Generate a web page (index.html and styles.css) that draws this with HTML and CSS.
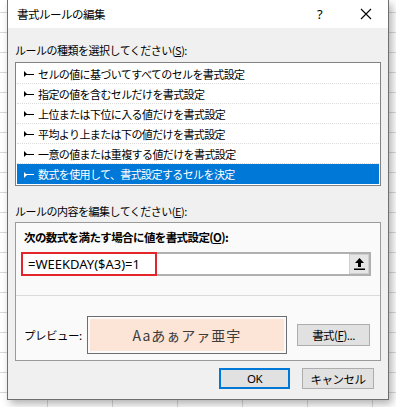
FILE: index.html
```
<!DOCTYPE html>
<html lang="ja">
<head>
    <meta charset="UTF-8">
    <title>書式ルールの編集</title>
    <link rel="stylesheet" href="styles.css">
</head>
<body>
    <div class="dialog">
        <!-- Title bar -->
        <div class="titlebar">
            <span class="title">書式ルールの編集</span>
            <span class="help">?</span>
            <span class="close">
                <svg width="12" height="12" viewBox="0 0 12 12"><path d="M1 1 L11 11 M11 1 L1 11" stroke="#000" stroke-width="1.1" fill="none"/></svg>
            </span>
        </div>

        <div class="body">
            <div class="label">ルールの種類を選択してください(<u>S</u>):</div>
            <ul class="rules">
                <li><span class="arrow"></span>セルの値に基づいてすべてのセルを書式設定</li>
                <li><span class="arrow"></span>指定の値を含むセルだけを書式設定</li>
                <li><span class="arrow"></span>上位または下位に入る値だけを書式設定</li>
                <li><span class="arrow"></span>平均より上または下の値だけを書式設定</li>
                <li><span class="arrow"></span>一意の値または重複する値だけを書式設定</li>
                <li class="selected"><span class="arrow"></span>数式を使用して、書式設定するセルを決定</li>
            </ul>

            <div class="label label-edit">ルールの内容を編集してください(<u>E</u>):</div>
            <div class="panel">
                <div class="panel-title">次の数式を満たす場合に値を書式設定(<u>O</u>):</div>
                <div class="formula">
                    <span class="formula-text">=WEEKDAY($A3)=1</span>
                    <span class="collapse">
                        <svg width="11" height="12" viewBox="0 0 11 12"><path d="M5.5 0 L10 5 L7 5 L7 9 L4 9 L4 5 L1 5 Z" fill="#000"/><rect x="0" y="10.5" width="11" height="1.5" fill="#000"/></svg>
                    </span>
                    <div class="highlight"></div>
                </div>
                <div class="separator"></div>
                <div class="preview-row">
                    <span class="preview-label">プレビュー:</span>
                    <div class="preview"><span>Aaあぁアァ亜宇</span></div>
                    <button class="btn btn-format">書式(<u>F</u>)...</button>
                </div>
            </div>

            <div class="actions">
                <button class="btn btn-ok">OK</button>
                <button class="btn btn-cancel">キャンセル</button>
            </div>
        </div>
    </div>
</body>
</html>
```

FILE: styles.css
```
html, body {
    margin: 0;
    height: 407px;
    overflow: hidden;
}
body {
    font-family: "Noto Sans CJK JP", "Noto Sans", sans-serif;
    font-size: 11px;
    letter-spacing: -0.5px;
    color: #000;
    background-color: #fff;
    background-image:
        repeating-linear-gradient(to right, transparent 0, transparent 47px, #d9d9d9 47px, #d9d9d9 48px, transparent 48px, transparent 65px),
        repeating-linear-gradient(to bottom, transparent 0, transparent 12px, #d9d9d9 12px, #d9d9d9 13px, transparent 13px, transparent 20px);
}
.dialog {
    margin-left: 7px;
    width: 382px;
    box-sizing: border-box;
    background: #f0f0f0;
    border: 1px solid #6e6e6e;
    border-top: none;
    box-shadow: 3px 4px 8px rgba(0, 0, 0, 0.3);
}
.titlebar {
    height: 28px;
    background: #fff;
    display: flex;
    align-items: center;
    padding-left: 9px;
}
.title {
    flex: 1;
    font-size: 11.5px;
}
.help {
    width: 12px;
    margin-right: 31px;
    font-size: 13px;
    font-family: "Noto Sans", sans-serif;
}
.close {
    width: 12px;
    height: 12px;
    margin-right: 16px;
    display: flex;
}
.body {
    padding: 0 7px 10px 7px;
}
.label {
    margin-top: 14px;
    height: 16px;
    line-height: 16px;
}
.label-edit {
    margin-top: 17px;
}
.rules {
    list-style: none;
    margin: 4px 0 0 0;
    padding: 1px;
    height: 124px;
    box-sizing: border-box;
    background: #fff;
    border: 1px solid #828282;
}
.rules li {
    height: 20px;
    box-sizing: border-box;
    display: flex;
    align-items: center;
    padding-left: 7px;
    letter-spacing: -0.6px;
    border-bottom: 1px dotted #dcdcdc;
}
.rules li.selected {
    background: #0078d7;
    color: #fff;
    border-bottom: none;
}
.arrow {
    width: 10px;
    height: 6px;
    margin-right: 4px;
    margin-top: 1px;
    background:
        linear-gradient(#000, #000) 0 2.5px / 10px 1px no-repeat;
    position: relative;
}
.arrow::before {
    content: "";
    position: absolute;
    left: 0;
    top: 0;
    border-left: 3px solid #000;
    border-top: 3px solid transparent;
    border-bottom: 3px solid transparent;
}
.selected .arrow {
    background:
        linear-gradient(#fff, #fff) 0 2.5px / 10px 1px no-repeat;
}
.selected .arrow::before {
    border-left-color: #fff;
}
.panel {
    margin-top: 3px;
    background: #fafafa;
    border: 1px solid #9a9a9a;
    padding: 6px 0 6px 0;
}
.panel-title {
    height: 16px;
    line-height: 16px;
    padding-left: 8px;
    font-weight: bold;
    font-size: 11.5px;
    letter-spacing: -0.6px;
}
.formula {
    position: relative;
    margin: 7px 9px 0 5px;
    height: 24px;
    box-sizing: border-box;
    border: 2px solid #b0b0b0;
    background: #fff;
    display: flex;
    align-items: center;
}
.formula-text {
    flex: 1;
    padding-left: 5px;
    font-family: "Noto Sans", sans-serif;
    font-size: 13px;
    letter-spacing: 0;
}
.collapse {
    width: 20px;
    height: 20px;
    box-sizing: border-box;
    background: #e6e6e6;
    border: 1px solid #d0d0d0;
    display: flex;
    align-items: center;
    justify-content: center;
}
.highlight {
    position: absolute;
    left: -2px;
    top: -2px;
    width: 136px;
    height: 24px;
    box-sizing: border-box;
    border: 2px solid #e3262b;
}
.separator {
    margin-top: 19px;
    height: 1px;
    background: #dadada;
}
.preview-row {
    margin-top: 20px;
    padding-left: 8px;
    display: flex;
    align-items: center;
    height: 38px;
}
.preview-label {
    width: 63px;
    font-size: 11.5px;
}
.preview {
    width: 200px;
    height: 38px;
    box-sizing: border-box;
    border: 1px solid #6d6d6d;
    padding: 2px;
    background: #fafafa;
    display: flex;
}
.preview span {
    flex: 1;
    background: #fce4d6;
    display: flex;
    align-items: center;
    justify-content: center;
    font-size: 14px;
    letter-spacing: 1px;
    color: #3c3c3c;
}
.btn {
    font-family: "Noto Sans CJK JP", "Noto Sans", sans-serif;
    font-size: 11.5px;
    letter-spacing: -0.5px;
    color: #000;
    background: #e1e1e1;
    border: 1px solid #adadad;
    height: 22px;
    padding: 0;
    box-sizing: border-box;
}
.btn-format {
    margin-left: 10px;
    width: 73px;
}
.actions {
    margin-top: 7px;
    margin-right: 7px;
    display: flex;
    justify-content: flex-end;
    gap: 12px;
}
.btn-ok {
    width: 71px;
    height: 21px;
    border: 2px solid #0078d7;
    font-family: "Noto Sans", sans-serif;
}
.btn-cancel {
    width: 72px;
    height: 21px;
}
```
